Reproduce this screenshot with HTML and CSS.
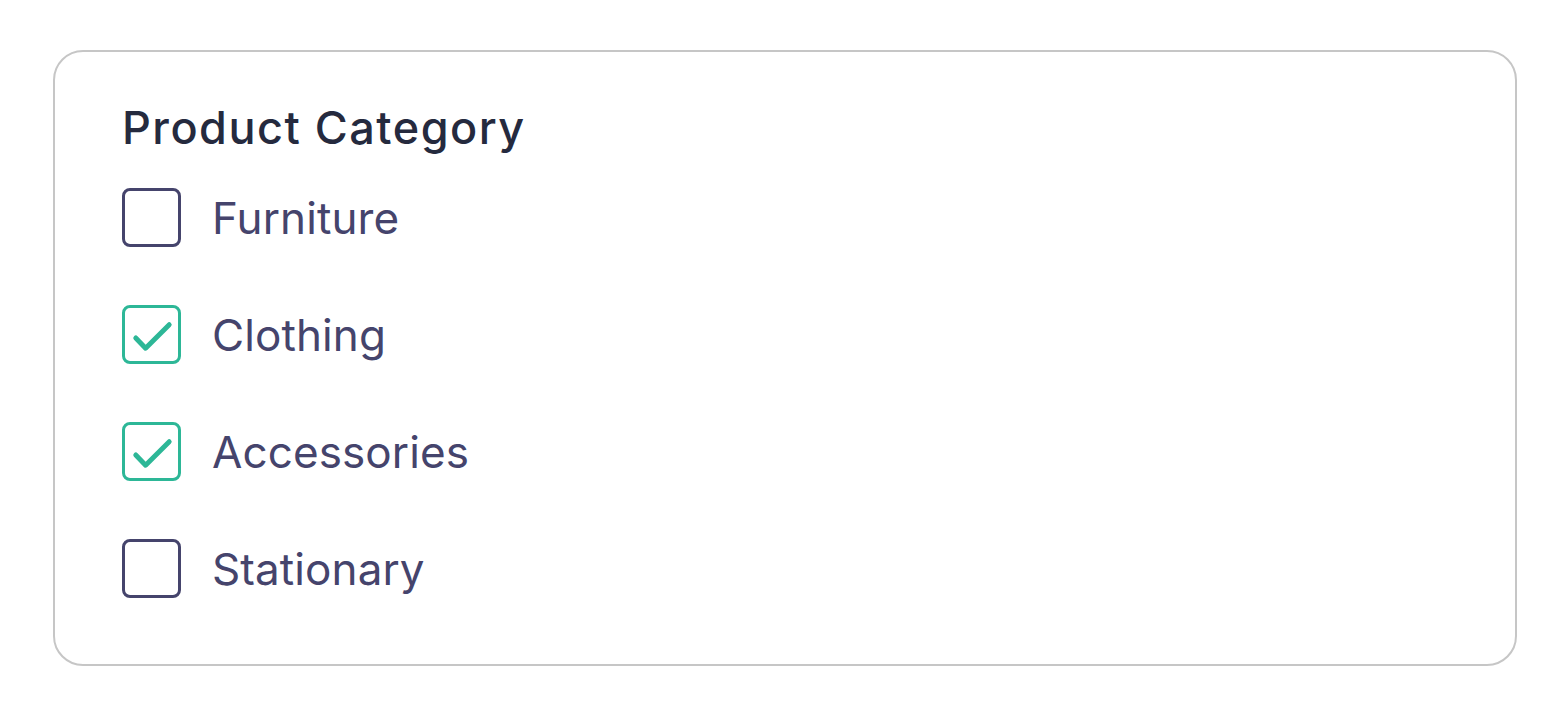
FILE: index.html
```html
<!DOCTYPE html>
<html lang="en">
<head>
<meta charset="utf-8">
<title>Product Category</title>
<link rel="stylesheet" href="styles.css">
</head>
<body>
<div class="card">
  <h2 class="title">Product Category</h2>
  <div class="list">
    <label class="item">
      <span class="box"></span>
      <span class="label">Furniture</span>
    </label>
    <label class="item">
      <span class="box checked">
        <svg viewBox="0 0 60 60" width="59" height="59"><path d="M14 33.5 L24 44 L48 20" fill="none" stroke="#2db797" stroke-width="5" stroke-linecap="round" stroke-linejoin="round"/></svg>
      </span>
      <span class="label">Clothing</span>
    </label>
    <label class="item">
      <span class="box checked">
        <svg viewBox="0 0 60 60" width="59" height="59"><path d="M14 33.5 L24 44 L48 20" fill="none" stroke="#2db797" stroke-width="5" stroke-linecap="round" stroke-linejoin="round"/></svg>
      </span>
      <span class="label">Accessories</span>
    </label>
    <label class="item">
      <span class="box"></span>
      <span class="label">Stationary</span>
    </label>
  </div>
</div>
</body>
</html>
```

FILE: styles.css
```css
html, body {
  margin: 0;
  background: #ffffff;
}
body {
  padding: 50px 47px 0 53px;
  font-family: Inter, "Noto Sans", sans-serif;
}
.card {
  border: 2px solid #c6c6c6;
  border-radius: 30px;
  padding: 49px 66px 67px 67px;
  box-sizing: border-box;
  height: 616px;
}
.title {
  margin: 0 0 33px 0;
  font-size: 45px;
  line-height: 54px;
  font-weight: 500;
  letter-spacing: 1.5px;
  color: #252a3e;
}
.list {
  display: flex;
  flex-direction: column;
  gap: 58px;
}
.item {
  display: flex;
  align-items: center;
  gap: 31px;
  height: 59px;
}
.box {
  width: 59px;
  height: 59px;
  box-sizing: border-box;
  border: 3px solid #45446c;
  border-radius: 8px;
  position: relative;
  flex: none;
}
.box.checked {
  border-color: #2db797;
}
.box svg {
  position: absolute;
  left: -3px;
  top: -3px;
}
.label {
  font-size: 44px;
  line-height: 54px;
  letter-spacing: 0.1px;
  color: #45446c;
}
```
